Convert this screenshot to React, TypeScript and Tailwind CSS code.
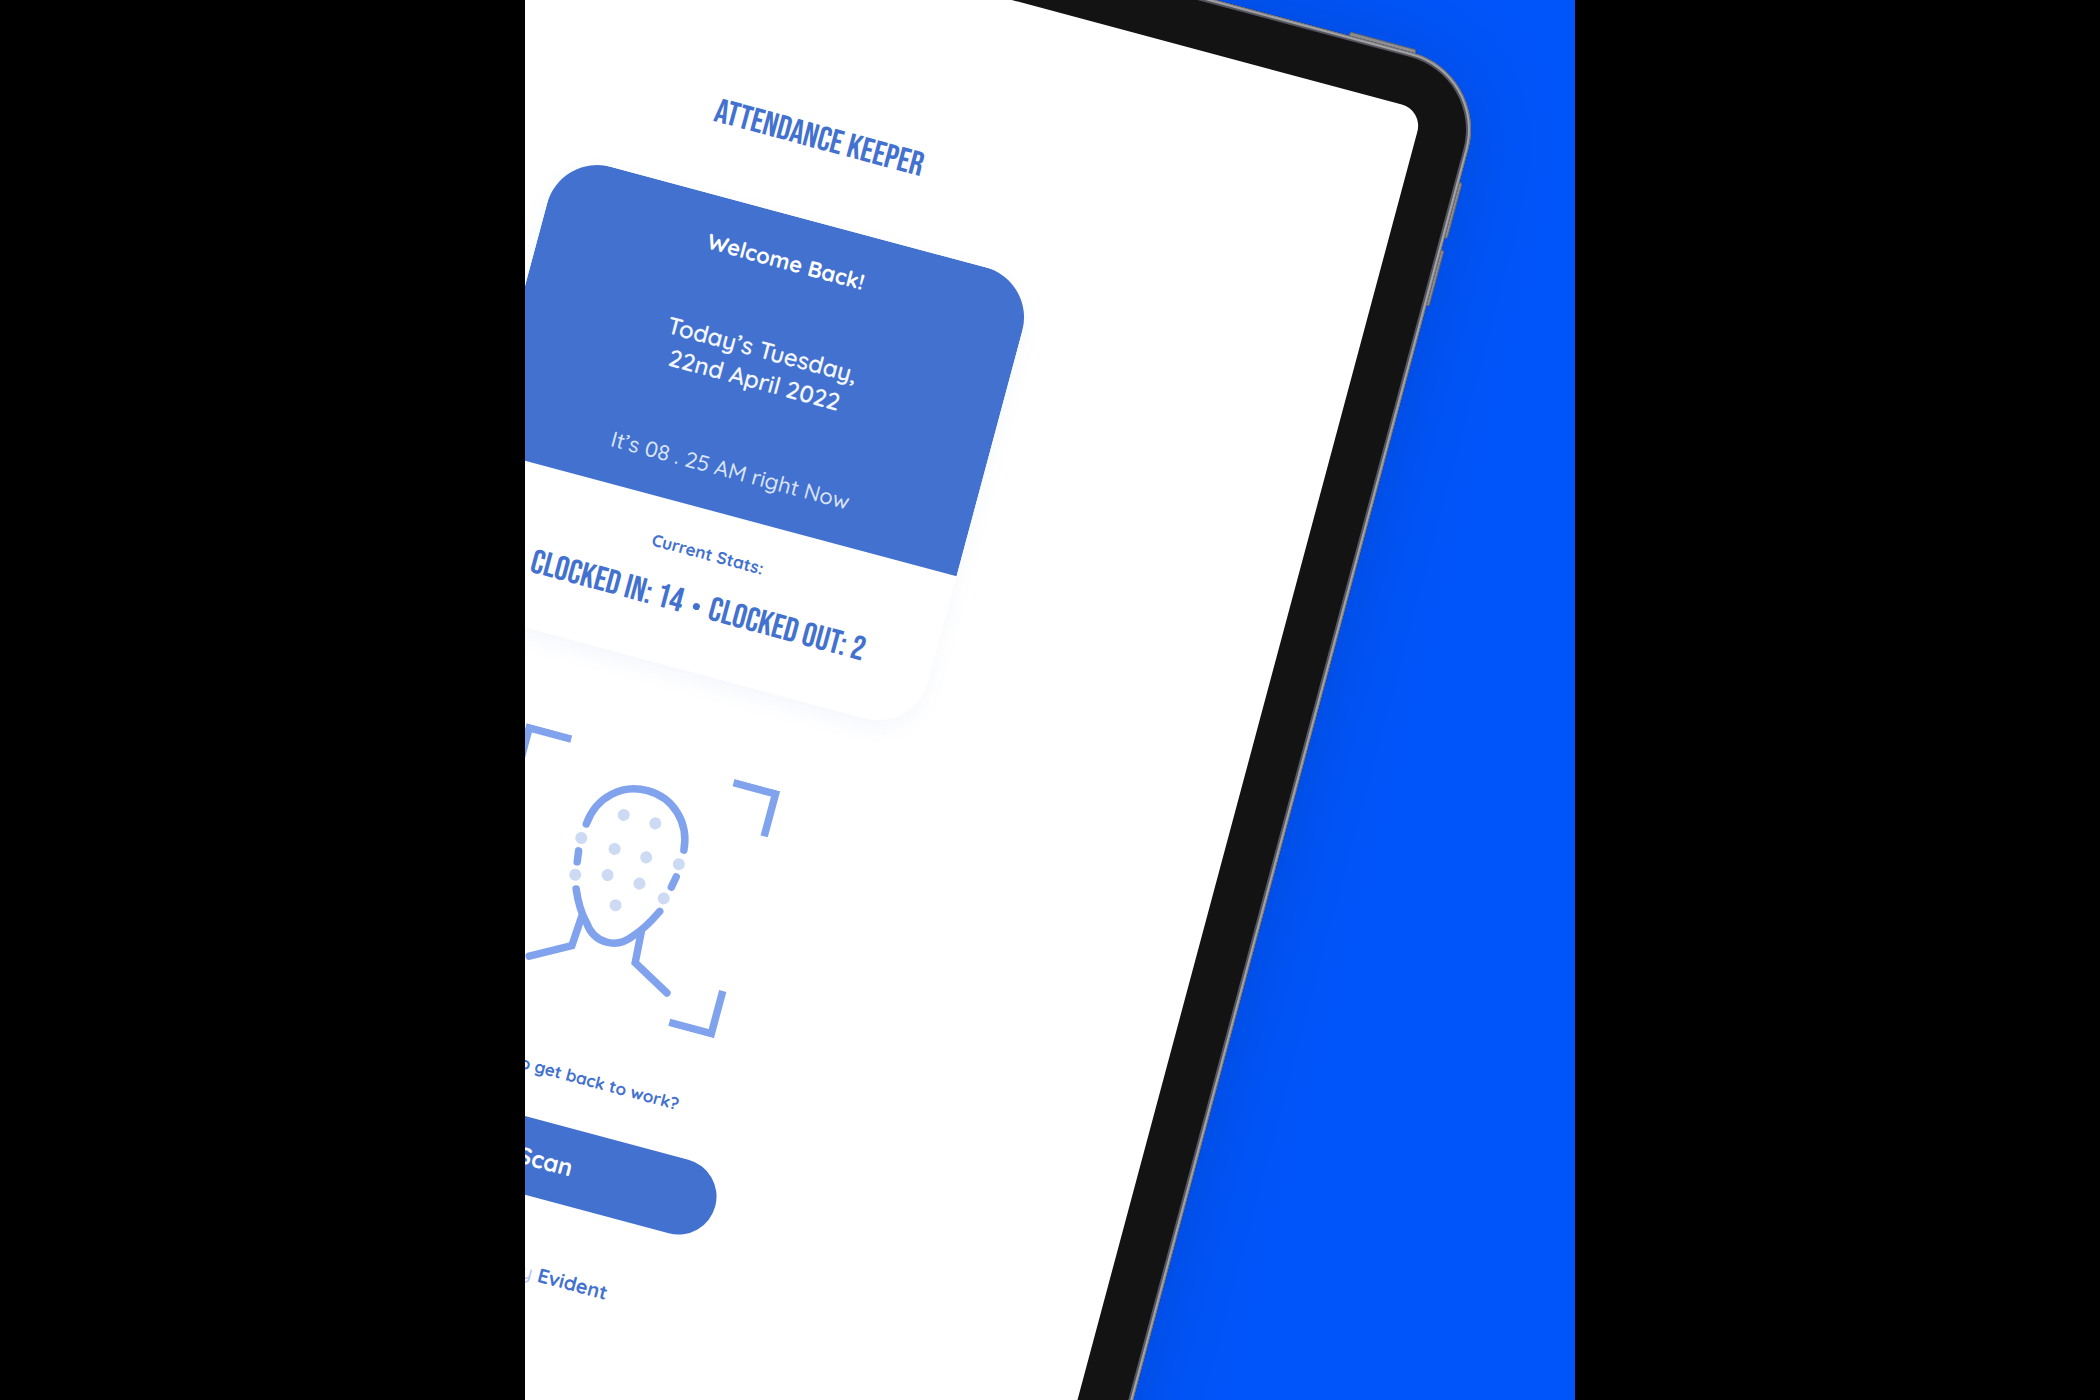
const corners = [
  "M236 703 H192.5 V747",
  "M404 703 H447.5 V747",
  "M236 951.3 H192.5 V907",
  "M404 951.3 H447.5 V907",
];

const strokes = [
  "M272.5 781 C275 752 297 733 323 733 S371 752 373.5 781",
  "M272 809 L273.5 820",
  "M373 809 L371 820",
  "M279.5 846.5 C284 857 290 868 298 876 C304 885 311 890 322.7 890 C334 890 341 885 347.5 876 C355 868 361 857 366 846.5",
  "M292 871 L290 902.3 L251.5 923.4",
  "M353.5 871 L355.6 902.3 L394.1 923.4",
];

const dots = [
  [306.3, 762.6],
  [339, 762.6],
  [271.3, 795.9],
  [306.3, 797.8],
  [339, 797.8],
  [372.3, 795.9],
  [275, 832.9],
  [306.3, 824.9],
  [339.2, 824.9],
  [366.5, 832.9],
  [321.8, 852],
];

function FaceScanIcon() {
  return (
    <svg className="h-64 w-66" viewBox="188 699 264 256" fill="none" role="img" aria-label="Face scan">
      <g stroke="#81a3ee" strokeWidth="7.5">
        {corners.map((d) => (
          <path key={d} d={d} />
        ))}
      </g>
      <g stroke="#81a3ee" strokeWidth="7.5" strokeLinecap="round">
        {strokes.map((d) => (
          <path key={d} d={d} />
        ))}
      </g>
      <g fill="#ccdaf4">
        {dots.map(([cx, cy]) => (
          <circle key={`${cx}-${cy}`} cx={cx} cy={cy} r="6" />
        ))}
      </g>
    </svg>
  );
}

function WelcomeCard() {
  return (
    <section className="mt-[61px] w-[492px] overflow-hidden rounded-[52px] bg-white text-center shadow-[0_8px_20px_rgba(67,113,207,0.06)]">
      <div className="bg-[#4371cf] px-8 pt-8 pb-[30px] text-white">
        <p className="text-[22px] leading-7 font-bold">Welcome Back!</p>
        <p className="mt-[62px] text-2xl leading-[31px] font-semibold text-[#f3f7fd]">
          Today’s Tuesday,
          <br />
          22nd April 2022
        </p>
        <p className="mt-16 text-[22px] leading-7 font-medium text-[#dae4f7]">It’s 08 . 25 AM right Now</p>
      </div>
      <div className="pt-[33px] pb-[45px] text-[#4371cf]">
        <p className="text-[17px] leading-5 font-bold">Current Stats:</p>
        <p className="mt-[23px] flex items-center justify-center gap-2.5 pl-2 font-['Bebas_Neue','Roboto_Condensed',sans-serif] text-[34px] leading-10">
          <span>Clocked In: 14</span>
          <span className="size-[7px] rounded-full bg-[#4371cf]" />
          <span>Clocked Out: 2</span>
        </p>
      </div>
    </section>
  );
}

function Tablet() {
  return (
    <div className="absolute -top-[179px] -left-[310px] h-[1740px] w-[1260px] origin-[310px_179px] rotate-15">
      <div className="absolute -top-1 right-[76px] h-2 w-[69px] rounded-xs border border-[#6a6a70] bg-[#98989c]" />
      <div className="absolute top-[113px] -right-[3px] h-[58px] w-2 rounded-xs border border-[#6a6a70] bg-[#98989c]" />
      <div className="absolute top-[183px] -right-[3px] h-[58px] w-2 rounded-xs border border-[#6a6a70] bg-[#98989c]" />
      <div className="relative h-full rounded-[80px] bg-[#131313] px-[54px] py-[53px] shadow-[inset_0_0_0_1px_#6f6f73,inset_0_0_0_3px_#a2a2a5,inset_0_0_0_5px_#55555f,0_0_100px_rgba(0,0,0,0.14)]">
        <div className="flex h-full flex-col items-center rounded-[22px] bg-white pt-[164px] font-['Quicksand','Lato',sans-serif] text-[#4371cf]">
          <h1 className="font-['Bebas_Neue','Roboto_Condensed',sans-serif] text-[34px] leading-10">Attendance Keeper</h1>
          <WelcomeCard />
          <div className="mt-[92px]">
            <FaceScanIcon />
          </div>
          <p className="mt-[63px] text-[17px] leading-5 font-bold">Ready to get back to work?</p>
          <button type="button" className="mt-[41px] h-19 w-[352px] rounded-full bg-[#4371cf] text-2xl font-bold text-white">
            Scan
          </button>
          <p className="mt-15 text-xl leading-7 font-medium text-[#b9cbef]">
            Powered by{" "}
            <a href="#evident" className="font-bold text-[#4371cf]">
              Evident
            </a>
          </p>
        </div>
      </div>
    </div>
  );
}

export default function App() {
  return (
    <main className="flex h-screen justify-center bg-black">
      <div className="relative h-full w-1/2 overflow-hidden bg-[#0055fa]">
        <Tablet />
      </div>
    </main>
  );
}
